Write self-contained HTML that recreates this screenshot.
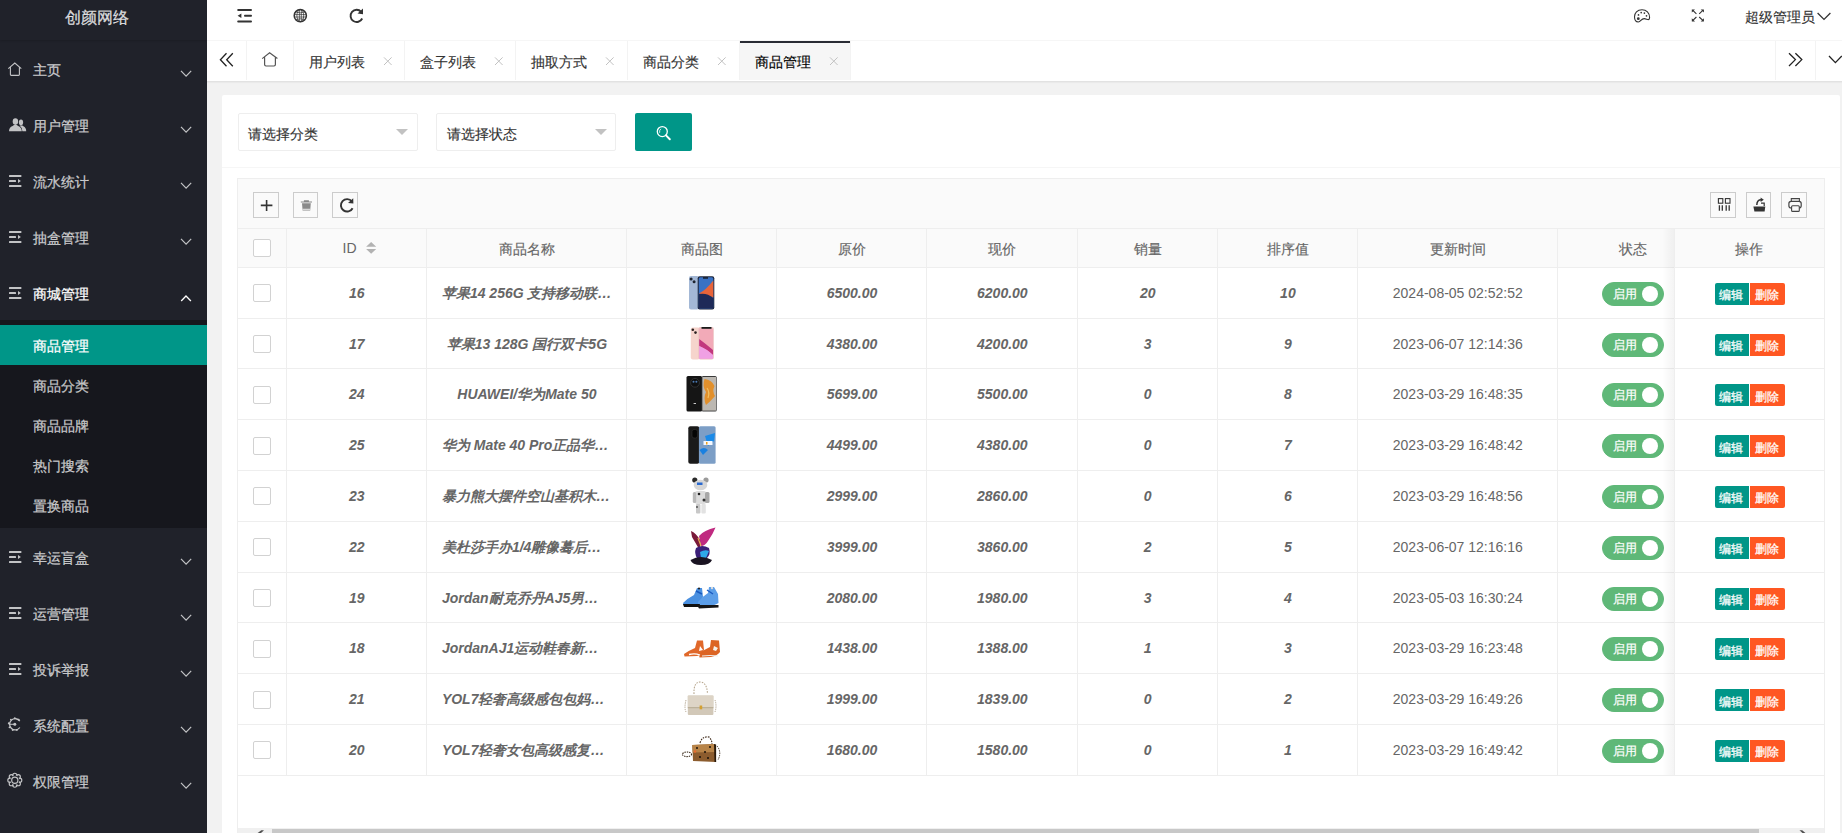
<!DOCTYPE html>
<html><head><meta charset="utf-8"><title>商品管理</title>
<style>
*{box-sizing:border-box;margin:0;padding:0}
html,body{width:1842px;height:833px;overflow:hidden;background:#f2f2f2;font-family:"Liberation Sans",sans-serif;font-size:14px;color:#333}
.a{position:absolute;white-space:nowrap}
.ov{position:absolute;left:0;top:0;pointer-events:none}
.c{position:absolute;text-align:center;color:#666;white-space:nowrap;overflow:hidden}
.b{font-weight:bold;font-style:italic}
.nm{padding:0 15px;text-overflow:ellipsis}
.cb{position:absolute;width:18px;height:18px;border:1px solid #d2d2d2;border-radius:2px;background:#fff}
.sw{position:absolute;width:62px;height:24px;border-radius:20px;background:#5fb878;border:1px solid #5fb878}
.sw span{-webkit-text-stroke:0.2px #fff;position:absolute;left:10px;top:0;line-height:22px;color:#fff;font-size:12px}
.sw i{position:absolute;left:39px;top:3px;width:16px;height:16px;border-radius:50%;background:#fff}
.ob{position:absolute;height:22px;line-height:22px;color:#fff;font-size:12px;text-align:center}
.hl{position:absolute;height:1px;background:#eee}
.st{-webkit-text-stroke:0.15px currentColor}
.st2{-webkit-text-stroke:0.25px currentColor}
.vl{position:absolute;width:1px;background:#eee}
</style></head><body>

<div class="a" style="left:0;top:0;width:207px;height:833px;background:#20222a"></div>
<div class="a" style="left:0;top:0;width:207px;height:40px;box-shadow:0 1px 2px 0 rgba(0,0,0,.15)"></div>
<span class="a st2" style="left:65px;top:-2px;line-height:40px;font-size:16px;color:rgba(255,255,255,.8)">创颜网络</span>
<span class="a st2" style="left:33px;top:41.5px;line-height:56px;color:rgba(255,255,255,.7)">主页</span>
<span class="a st2" style="left:33px;top:97.5px;line-height:56px;color:rgba(255,255,255,.7)">用户管理</span>
<span class="a st2" style="left:33px;top:153.5px;line-height:56px;color:rgba(255,255,255,.7)">流水统计</span>
<span class="a st2" style="left:33px;top:209.5px;line-height:56px;color:rgba(255,255,255,.7)">抽盒管理</span>
<span class="a st2" style="left:33px;top:265.5px;line-height:56px;color:#fff">商城管理</span>
<div class="a" style="left:0;top:320px;width:207px;height:208px;background:rgba(0,0,0,.3)"></div>
<div class="a" style="left:0;top:324.5px;width:207px;height:40px;background:#009688"></div>
<span class="a st2" style="left:33px;top:326.0px;line-height:40px;color:#fff">商品管理</span>
<span class="a st2" style="left:33px;top:366.0px;line-height:40px;color:rgba(255,255,255,.7)">商品分类</span>
<span class="a st2" style="left:33px;top:406.0px;line-height:40px;color:rgba(255,255,255,.7)">商品品牌</span>
<span class="a st2" style="left:33px;top:446.0px;line-height:40px;color:rgba(255,255,255,.7)">热门搜索</span>
<span class="a st2" style="left:33px;top:486.0px;line-height:40px;color:rgba(255,255,255,.7)">置换商品</span>
<span class="a st2" style="left:33px;top:529.5px;line-height:56px;color:rgba(255,255,255,.7)">幸运盲盒</span>
<span class="a st2" style="left:33px;top:585.5px;line-height:56px;color:rgba(255,255,255,.7)">运营管理</span>
<span class="a st2" style="left:33px;top:641.5px;line-height:56px;color:rgba(255,255,255,.7)">投诉举报</span>
<span class="a st2" style="left:33px;top:697.5px;line-height:56px;color:rgba(255,255,255,.7)">系统配置</span>
<span class="a st2" style="left:33px;top:753.5px;line-height:56px;color:rgba(255,255,255,.7)">权限管理</span>
<div class="a" style="left:207px;top:0;width:1635px;height:41px;background:#fff;border-bottom:1px solid #f6f6f6"></div>
<span class="a st" style="left:1745px;top:0;line-height:34px;color:#333">超级管理员</span>
<div class="a" style="left:207px;top:41px;width:1635px;height:41px;background:#fff;border-bottom:1px solid #e2e2e2;box-shadow:0 1px 1px 0 rgba(0,0,0,.03)"></div>
<div class="a" style="left:739px;top:41px;width:111px;height:39px;background:#f6f6f6"></div>
<div class="a" style="left:739px;top:41px;width:111px;height:2px;background:#292b34"></div>
<div class="vl" style="left:245.8px;top:41px;height:39px;background:#f3f3f3"></div>
<div class="vl" style="left:292.8px;top:41px;height:39px;background:#f3f3f3"></div>
<div class="vl" style="left:403.5px;top:41px;height:39px;background:#f3f3f3"></div>
<div class="vl" style="left:514.5px;top:41px;height:39px;background:#f3f3f3"></div>
<div class="vl" style="left:626.5px;top:41px;height:39px;background:#f3f3f3"></div>
<div class="vl" style="left:738.5px;top:41px;height:39px;background:#f3f3f3"></div>
<div class="vl" style="left:849.5px;top:41px;height:39px;background:#f3f3f3"></div>
<div class="vl" style="left:1774.7px;top:41px;height:39px;background:#f3f3f3"></div>
<div class="vl" style="left:1814.8px;top:41px;height:39px;background:#f3f3f3"></div>
<span class="a st" style="left:308.5px;top:42px;line-height:40px;color:#333">用户列表</span>
<span class="a st" style="left:419.5px;top:42px;line-height:40px;color:#333">盒子列表</span>
<span class="a st" style="left:530.5px;top:42px;line-height:40px;color:#333">抽取方式</span>
<span class="a st" style="left:642.5px;top:42px;line-height:40px;color:#333">商品分类</span>
<span class="a st" style="left:754.5px;top:42px;line-height:40px;color:#000">商品管理</span>
<div class="a" style="left:222px;top:95px;width:1618px;height:760px;background:#fff;border-radius:2px"></div>
<div class="a" style="left:222px;top:166.5px;width:1618px;height:1px;background:#f6f6f6"></div>
<div class="a" style="left:237.5px;top:113px;width:180px;height:38px;border:1px solid #eee;border-radius:2px;background:#fff"></div>
<span class="a st" style="left:248.0px;top:115.5px;line-height:36px;color:#333">请选择分类</span>
<div class="a" style="left:435.5px;top:113px;width:180px;height:38px;border:1px solid #eee;border-radius:2px;background:#fff"></div>
<span class="a st" style="left:447.0px;top:115.5px;line-height:36px;color:#333">请选择状态</span>
<div class="a" style="left:635px;top:113.4px;width:57.3px;height:37.6px;background:#009688;border-radius:2px"></div>
<div class="a" style="left:237.3px;top:178.2px;width:1588px;height:700px;border:1px solid #eee;background:#fff"></div>
<div class="a" style="left:238.3px;top:179.2px;width:1586px;height:49.4px;background:#fafafa"></div>
<div class="a" style="left:253px;top:192.1px;width:25.6px;height:25.6px;border:1px solid #ccc"></div>
<div class="a" style="left:292.7px;top:192.1px;width:25.6px;height:25.6px;border:1px solid #ccc"></div>
<div class="a" style="left:332.3px;top:192.1px;width:25.6px;height:25.6px;border:1px solid #ccc"></div>
<div class="a" style="left:1710.1px;top:192.1px;width:25.6px;height:25.6px;border:1px solid #ccc"></div>
<div class="a" style="left:1745.9px;top:192.1px;width:25.6px;height:25.6px;border:1px solid #ccc"></div>
<div class="a" style="left:1781.4px;top:192.1px;width:25.6px;height:25.6px;border:1px solid #ccc"></div>
<div class="hl" style="left:238.3px;top:228.1px;width:1586px"></div>
<div class="a" style="left:238.3px;top:229.1px;width:1586px;height:37.70000000000002px;background:#fafafa"></div>
<div class="hl" style="left:238.3px;top:266.8px;width:1586px"></div>
<div class="hl" style="left:238.3px;top:317.59px;width:1586px"></div>
<div class="hl" style="left:238.3px;top:368.38px;width:1586px"></div>
<div class="hl" style="left:238.3px;top:419.17px;width:1586px"></div>
<div class="hl" style="left:238.3px;top:469.96px;width:1586px"></div>
<div class="hl" style="left:238.3px;top:520.75px;width:1586px"></div>
<div class="hl" style="left:238.3px;top:571.54px;width:1586px"></div>
<div class="hl" style="left:238.3px;top:622.33px;width:1586px"></div>
<div class="hl" style="left:238.3px;top:673.12px;width:1586px"></div>
<div class="hl" style="left:238.3px;top:723.91px;width:1586px"></div>
<div class="hl" style="left:238.3px;top:774.70px;width:1586px"></div>
<div class="vl" style="left:285.6px;top:228.6px;height:546.60px"></div>
<div class="vl" style="left:425.9px;top:228.6px;height:546.60px"></div>
<div class="vl" style="left:625.9px;top:228.6px;height:546.60px"></div>
<div class="vl" style="left:775.8px;top:228.6px;height:546.60px"></div>
<div class="vl" style="left:926.2px;top:228.6px;height:546.60px"></div>
<div class="vl" style="left:1076.5px;top:228.6px;height:546.60px"></div>
<div class="vl" style="left:1217.0px;top:228.6px;height:546.60px"></div>
<div class="vl" style="left:1356.8px;top:228.6px;height:546.60px"></div>
<div class="vl" style="left:1557.2px;top:228.6px;height:546.60px"></div>
<span class="a" style="left:342.5px;top:228.6px;line-height:38px;color:#666">ID</span>
<div class="c st" style="left:426.9px;top:229.6px;width:200.0px;line-height:38px">商品名称</div>
<div class="c st" style="left:626.9px;top:229.6px;width:149.89999999999998px;line-height:38px">商品图</div>
<div class="c st" style="left:776.8px;top:229.6px;width:150.4000000000001px;line-height:38px">原价</div>
<div class="c st" style="left:927.2px;top:229.6px;width:150.29999999999995px;line-height:38px">现价</div>
<div class="c st" style="left:1077.5px;top:229.6px;width:140.5px;line-height:38px">销量</div>
<div class="c st" style="left:1218.0px;top:229.6px;width:139.79999999999995px;line-height:38px">排序值</div>
<div class="c st" style="left:1357.8px;top:229.6px;width:200.4000000000001px;line-height:38px">更新时间</div>
<span class="a st" style="left:1619px;top:229.6px;line-height:38px;color:#666">状态</span>
<div class="cb" style="left:253px;top:239px"></div>
<div class="c b" style="left:286.6px;top:267.90px;width:140.29999999999995px;line-height:50.79px">16</div>
<div class="c b" style="left:776.8px;top:267.90px;width:150.4000000000001px;line-height:50.79px">6500.00</div>
<div class="c b" style="left:927.2px;top:267.90px;width:150.29999999999995px;line-height:50.79px">6200.00</div>
<div class="c b" style="left:1077.5px;top:267.90px;width:140.5px;line-height:50.79px">20</div>
<div class="c b" style="left:1218.0px;top:267.90px;width:139.79999999999995px;line-height:50.79px">10</div>
<div class="c b nm" style="left:426.9px;top:267.90px;width:200px;line-height:50.79px">苹果14 256G 支持移动联通电信</div>
<div class="c" style="left:1357.8px;top:267.90px;width:200px;line-height:50.79px">2024-08-05 02:52:52</div>
<div class="cb" style="left:253px;top:284.30px"></div>
<div class="sw" style="left:1602px;top:281.90px"><span>启用</span><i></i></div>
<div class="c b" style="left:286.6px;top:318.69px;width:140.29999999999995px;line-height:50.79px">17</div>
<div class="c b" style="left:776.8px;top:318.69px;width:150.4000000000001px;line-height:50.79px">4380.00</div>
<div class="c b" style="left:927.2px;top:318.69px;width:150.29999999999995px;line-height:50.79px">4200.00</div>
<div class="c b" style="left:1077.5px;top:318.69px;width:140.5px;line-height:50.79px">3</div>
<div class="c b" style="left:1218.0px;top:318.69px;width:139.79999999999995px;line-height:50.79px">9</div>
<div class="c b nm" style="left:426.9px;top:318.69px;width:200px;line-height:50.79px">苹果13 128G 国行双卡5G</div>
<div class="c" style="left:1357.8px;top:318.69px;width:200px;line-height:50.79px">2023-06-07 12:14:36</div>
<div class="cb" style="left:253px;top:335.09px"></div>
<div class="sw" style="left:1602px;top:332.69px"><span>启用</span><i></i></div>
<div class="c b" style="left:286.6px;top:369.48px;width:140.29999999999995px;line-height:50.79px">24</div>
<div class="c b" style="left:776.8px;top:369.48px;width:150.4000000000001px;line-height:50.79px">5699.00</div>
<div class="c b" style="left:927.2px;top:369.48px;width:150.29999999999995px;line-height:50.79px">5500.00</div>
<div class="c b" style="left:1077.5px;top:369.48px;width:140.5px;line-height:50.79px">0</div>
<div class="c b" style="left:1218.0px;top:369.48px;width:139.79999999999995px;line-height:50.79px">8</div>
<div class="c b nm" style="left:426.9px;top:369.48px;width:200px;line-height:50.79px">HUAWEI/华为Mate 50</div>
<div class="c" style="left:1357.8px;top:369.48px;width:200px;line-height:50.79px">2023-03-29 16:48:35</div>
<div class="cb" style="left:253px;top:385.88px"></div>
<div class="sw" style="left:1602px;top:383.48px"><span>启用</span><i></i></div>
<div class="c b" style="left:286.6px;top:420.27px;width:140.29999999999995px;line-height:50.79px">25</div>
<div class="c b" style="left:776.8px;top:420.27px;width:150.4000000000001px;line-height:50.79px">4499.00</div>
<div class="c b" style="left:927.2px;top:420.27px;width:150.29999999999995px;line-height:50.79px">4380.00</div>
<div class="c b" style="left:1077.5px;top:420.27px;width:140.5px;line-height:50.79px">0</div>
<div class="c b" style="left:1218.0px;top:420.27px;width:139.79999999999995px;line-height:50.79px">7</div>
<div class="c b nm" style="left:426.9px;top:420.27px;width:200px;line-height:50.79px">华为 Mate 40 Pro正品华为手机</div>
<div class="c" style="left:1357.8px;top:420.27px;width:200px;line-height:50.79px">2023-03-29 16:48:42</div>
<div class="cb" style="left:253px;top:436.67px"></div>
<div class="sw" style="left:1602px;top:434.27px"><span>启用</span><i></i></div>
<div class="c b" style="left:286.6px;top:471.06px;width:140.29999999999995px;line-height:50.79px">23</div>
<div class="c b" style="left:776.8px;top:471.06px;width:150.4000000000001px;line-height:50.79px">2999.00</div>
<div class="c b" style="left:927.2px;top:471.06px;width:150.29999999999995px;line-height:50.79px">2860.00</div>
<div class="c b" style="left:1077.5px;top:471.06px;width:140.5px;line-height:50.79px">0</div>
<div class="c b" style="left:1218.0px;top:471.06px;width:139.79999999999995px;line-height:50.79px">6</div>
<div class="c b nm" style="left:426.9px;top:471.06px;width:200px;line-height:50.79px">暴力熊大摆件空山基积木熊摆件</div>
<div class="c" style="left:1357.8px;top:471.06px;width:200px;line-height:50.79px">2023-03-29 16:48:56</div>
<div class="cb" style="left:253px;top:487.46px"></div>
<div class="sw" style="left:1602px;top:485.06px"><span>启用</span><i></i></div>
<div class="c b" style="left:286.6px;top:521.85px;width:140.29999999999995px;line-height:50.79px">22</div>
<div class="c b" style="left:776.8px;top:521.85px;width:150.4000000000001px;line-height:50.79px">3999.00</div>
<div class="c b" style="left:927.2px;top:521.85px;width:150.29999999999995px;line-height:50.79px">3860.00</div>
<div class="c b" style="left:1077.5px;top:521.85px;width:140.5px;line-height:50.79px">2</div>
<div class="c b" style="left:1218.0px;top:521.85px;width:139.79999999999995px;line-height:50.79px">5</div>
<div class="c b nm" style="left:426.9px;top:521.85px;width:200px;line-height:50.79px">美杜莎手办1/4雕像蓦后雕像</div>
<div class="c" style="left:1357.8px;top:521.85px;width:200px;line-height:50.79px">2023-06-07 12:16:16</div>
<div class="cb" style="left:253px;top:538.25px"></div>
<div class="sw" style="left:1602px;top:535.85px"><span>启用</span><i></i></div>
<div class="c b" style="left:286.6px;top:572.64px;width:140.29999999999995px;line-height:50.79px">19</div>
<div class="c b" style="left:776.8px;top:572.64px;width:150.4000000000001px;line-height:50.79px">2080.00</div>
<div class="c b" style="left:927.2px;top:572.64px;width:150.29999999999995px;line-height:50.79px">1980.00</div>
<div class="c b" style="left:1077.5px;top:572.64px;width:140.5px;line-height:50.79px">3</div>
<div class="c b" style="left:1218.0px;top:572.64px;width:139.79999999999995px;line-height:50.79px">4</div>
<div class="c b nm" style="left:426.9px;top:572.64px;width:200px;line-height:50.79px">Jordan耐克乔丹AJ5男子篮球鞋</div>
<div class="c" style="left:1357.8px;top:572.64px;width:200px;line-height:50.79px">2023-05-03 16:30:24</div>
<div class="cb" style="left:253px;top:589.04px"></div>
<div class="sw" style="left:1602px;top:586.64px"><span>启用</span><i></i></div>
<div class="c b" style="left:286.6px;top:623.43px;width:140.29999999999995px;line-height:50.79px">18</div>
<div class="c b" style="left:776.8px;top:623.43px;width:150.4000000000001px;line-height:50.79px">1438.00</div>
<div class="c b" style="left:927.2px;top:623.43px;width:150.29999999999995px;line-height:50.79px">1388.00</div>
<div class="c b" style="left:1077.5px;top:623.43px;width:140.5px;line-height:50.79px">1</div>
<div class="c b" style="left:1218.0px;top:623.43px;width:139.79999999999995px;line-height:50.79px">3</div>
<div class="c b nm" style="left:426.9px;top:623.43px;width:200px;line-height:50.79px">JordanAJ1运动鞋春新款男鞋</div>
<div class="c" style="left:1357.8px;top:623.43px;width:200px;line-height:50.79px">2023-03-29 16:23:48</div>
<div class="cb" style="left:253px;top:639.83px"></div>
<div class="sw" style="left:1602px;top:637.43px"><span>启用</span><i></i></div>
<div class="c b" style="left:286.6px;top:674.22px;width:140.29999999999995px;line-height:50.79px">21</div>
<div class="c b" style="left:776.8px;top:674.22px;width:150.4000000000001px;line-height:50.79px">1999.00</div>
<div class="c b" style="left:927.2px;top:674.22px;width:150.29999999999995px;line-height:50.79px">1839.00</div>
<div class="c b" style="left:1077.5px;top:674.22px;width:140.5px;line-height:50.79px">0</div>
<div class="c b" style="left:1218.0px;top:674.22px;width:139.79999999999995px;line-height:50.79px">2</div>
<div class="c b nm" style="left:426.9px;top:674.22px;width:200px;line-height:50.79px">YOL7轻奢高级感包包妈妈包</div>
<div class="c" style="left:1357.8px;top:674.22px;width:200px;line-height:50.79px">2023-03-29 16:49:26</div>
<div class="cb" style="left:253px;top:690.62px"></div>
<div class="sw" style="left:1602px;top:688.22px"><span>启用</span><i></i></div>
<div class="c b" style="left:286.6px;top:725.01px;width:140.29999999999995px;line-height:50.79px">20</div>
<div class="c b" style="left:776.8px;top:725.01px;width:150.4000000000001px;line-height:50.79px">1680.00</div>
<div class="c b" style="left:927.2px;top:725.01px;width:150.29999999999995px;line-height:50.79px">1580.00</div>
<div class="c b" style="left:1077.5px;top:725.01px;width:140.5px;line-height:50.79px">0</div>
<div class="c b" style="left:1218.0px;top:725.01px;width:139.79999999999995px;line-height:50.79px">1</div>
<div class="c b nm" style="left:426.9px;top:725.01px;width:200px;line-height:50.79px">YOL7轻奢女包高级感复古手提包</div>
<div class="c" style="left:1357.8px;top:725.01px;width:200px;line-height:50.79px">2023-03-29 16:49:42</div>
<div class="cb" style="left:253px;top:741.41px"></div>
<div class="sw" style="left:1602px;top:739.01px"><span>启用</span><i></i></div>
<div class="a" style="left:1662.4px;top:228.6px;width:12px;height:546.60px;background:linear-gradient(to right,rgba(0,0,0,0),rgba(0,0,0,.045))"></div>
<div class="a" style="left:1673.9px;top:229.1px;width:150.0px;height:37.70000000000002px;background:#fafafa;border-left:1px solid #eee"></div>
<span class="a st" style="left:1734.5px;top:229.6px;line-height:38px;color:#666">操作</span>
<div class="a" style="left:1673.9px;top:267.80px;width:150.0px;height:49.79px;background:#fff;border-left:1px solid #eee"></div>
<div class="ob" style="left:1714.8px;top:282.80px;width:34.4px;background:#009688;border-radius:2px 0 0 2px"><span class="st2" style="position:relative;top:1.5px;left:-0.8px">编辑</span></div>
<div class="ob" style="left:1749.8px;top:282.80px;width:35.2px;background:#ff5722;border-radius:0 2px 2px 0"><span class="st2" style="position:relative;top:1.5px;left:-0.8px">删除</span></div>
<div class="a" style="left:1673.9px;top:318.59px;width:150.0px;height:49.79px;background:#fff;border-left:1px solid #eee"></div>
<div class="ob" style="left:1714.8px;top:333.59px;width:34.4px;background:#009688;border-radius:2px 0 0 2px"><span class="st2" style="position:relative;top:1.5px;left:-0.8px">编辑</span></div>
<div class="ob" style="left:1749.8px;top:333.59px;width:35.2px;background:#ff5722;border-radius:0 2px 2px 0"><span class="st2" style="position:relative;top:1.5px;left:-0.8px">删除</span></div>
<div class="a" style="left:1673.9px;top:369.38px;width:150.0px;height:49.79px;background:#fff;border-left:1px solid #eee"></div>
<div class="ob" style="left:1714.8px;top:384.38px;width:34.4px;background:#009688;border-radius:2px 0 0 2px"><span class="st2" style="position:relative;top:1.5px;left:-0.8px">编辑</span></div>
<div class="ob" style="left:1749.8px;top:384.38px;width:35.2px;background:#ff5722;border-radius:0 2px 2px 0"><span class="st2" style="position:relative;top:1.5px;left:-0.8px">删除</span></div>
<div class="a" style="left:1673.9px;top:420.17px;width:150.0px;height:49.79px;background:#fff;border-left:1px solid #eee"></div>
<div class="ob" style="left:1714.8px;top:435.17px;width:34.4px;background:#009688;border-radius:2px 0 0 2px"><span class="st2" style="position:relative;top:1.5px;left:-0.8px">编辑</span></div>
<div class="ob" style="left:1749.8px;top:435.17px;width:35.2px;background:#ff5722;border-radius:0 2px 2px 0"><span class="st2" style="position:relative;top:1.5px;left:-0.8px">删除</span></div>
<div class="a" style="left:1673.9px;top:470.96px;width:150.0px;height:49.79px;background:#fff;border-left:1px solid #eee"></div>
<div class="ob" style="left:1714.8px;top:485.96px;width:34.4px;background:#009688;border-radius:2px 0 0 2px"><span class="st2" style="position:relative;top:1.5px;left:-0.8px">编辑</span></div>
<div class="ob" style="left:1749.8px;top:485.96px;width:35.2px;background:#ff5722;border-radius:0 2px 2px 0"><span class="st2" style="position:relative;top:1.5px;left:-0.8px">删除</span></div>
<div class="a" style="left:1673.9px;top:521.75px;width:150.0px;height:49.79px;background:#fff;border-left:1px solid #eee"></div>
<div class="ob" style="left:1714.8px;top:536.75px;width:34.4px;background:#009688;border-radius:2px 0 0 2px"><span class="st2" style="position:relative;top:1.5px;left:-0.8px">编辑</span></div>
<div class="ob" style="left:1749.8px;top:536.75px;width:35.2px;background:#ff5722;border-radius:0 2px 2px 0"><span class="st2" style="position:relative;top:1.5px;left:-0.8px">删除</span></div>
<div class="a" style="left:1673.9px;top:572.54px;width:150.0px;height:49.79px;background:#fff;border-left:1px solid #eee"></div>
<div class="ob" style="left:1714.8px;top:587.54px;width:34.4px;background:#009688;border-radius:2px 0 0 2px"><span class="st2" style="position:relative;top:1.5px;left:-0.8px">编辑</span></div>
<div class="ob" style="left:1749.8px;top:587.54px;width:35.2px;background:#ff5722;border-radius:0 2px 2px 0"><span class="st2" style="position:relative;top:1.5px;left:-0.8px">删除</span></div>
<div class="a" style="left:1673.9px;top:623.33px;width:150.0px;height:49.79px;background:#fff;border-left:1px solid #eee"></div>
<div class="ob" style="left:1714.8px;top:638.33px;width:34.4px;background:#009688;border-radius:2px 0 0 2px"><span class="st2" style="position:relative;top:1.5px;left:-0.8px">编辑</span></div>
<div class="ob" style="left:1749.8px;top:638.33px;width:35.2px;background:#ff5722;border-radius:0 2px 2px 0"><span class="st2" style="position:relative;top:1.5px;left:-0.8px">删除</span></div>
<div class="a" style="left:1673.9px;top:674.12px;width:150.0px;height:49.79px;background:#fff;border-left:1px solid #eee"></div>
<div class="ob" style="left:1714.8px;top:689.12px;width:34.4px;background:#009688;border-radius:2px 0 0 2px"><span class="st2" style="position:relative;top:1.5px;left:-0.8px">编辑</span></div>
<div class="ob" style="left:1749.8px;top:689.12px;width:35.2px;background:#ff5722;border-radius:0 2px 2px 0"><span class="st2" style="position:relative;top:1.5px;left:-0.8px">删除</span></div>
<div class="a" style="left:1673.9px;top:724.91px;width:150.0px;height:49.79px;background:#fff;border-left:1px solid #eee"></div>
<div class="ob" style="left:1714.8px;top:739.91px;width:34.4px;background:#009688;border-radius:2px 0 0 2px"><span class="st2" style="position:relative;top:1.5px;left:-0.8px">编辑</span></div>
<div class="ob" style="left:1749.8px;top:739.91px;width:35.2px;background:#ff5722;border-radius:0 2px 2px 0"><span class="st2" style="position:relative;top:1.5px;left:-0.8px">删除</span></div>
<div class="a" style="left:238.3px;top:827.5px;width:1586px;height:6px;background:#f0f0f0"></div>
<div class="a" style="left:271.7px;top:828.5px;width:1487.3px;height:5px;background:#c8c8c8"></div>
<svg class="ov" width="1842" height="833" viewBox="0 0 1842 833"><path d="M8.3 68.6 L14.8 63 L21.3 68.6 M10.4 67.2 V74.6 Q10.4 75.4 11.2 75.4 H18.6 Q19.4 75.4 19.4 74.6 V67.2" fill="none" stroke="#c2c3c5" stroke-width="1.1"/><ellipse cx="15.4" cy="121.6" rx="2.7" ry="3.3" fill="#c2c3c5"/><path d="M9 131.2 Q9 127.3 12.6 126 L14 125 H16.8 L18.2 126 Q21.6 127.3 21.8 131.2Z" fill="#c2c3c5"/><ellipse cx="21" cy="122.4" rx="2.1" ry="2.8" fill="#c2c3c5"/><path d="M19.6 125.6 H22.4 L23.4 126.2 Q26.2 127.5 26.2 131.2 H22.4 Q22.4 128 19.6 125.6Z" fill="#c2c3c5"/><rect x="9" y="175" width="12.4" height="2" rx="0.5" fill="#c2c3c5"/><rect x="9" y="180" width="7" height="2" rx="0.5" fill="#c2c3c5"/><path d="M18 179.1 L20.9 181 L18 182.9Z" fill="#c2c3c5"/><rect x="9" y="184.9" width="12.4" height="2" rx="0.5" fill="#c2c3c5"/><rect x="9" y="231" width="12.4" height="2" rx="0.5" fill="#c2c3c5"/><rect x="9" y="236" width="7" height="2" rx="0.5" fill="#c2c3c5"/><path d="M18 235.1 L20.9 237 L18 238.9Z" fill="#c2c3c5"/><rect x="9" y="240.9" width="12.4" height="2" rx="0.5" fill="#c2c3c5"/><rect x="9" y="287" width="12.4" height="2" rx="0.5" fill="#c2c3c5"/><rect x="9" y="292" width="7" height="2" rx="0.5" fill="#c2c3c5"/><path d="M18 291.1 L20.9 293 L18 294.9Z" fill="#c2c3c5"/><rect x="9" y="296.9" width="12.4" height="2" rx="0.5" fill="#c2c3c5"/><rect x="9" y="551" width="12.4" height="2" rx="0.5" fill="#c2c3c5"/><rect x="9" y="556" width="7" height="2" rx="0.5" fill="#c2c3c5"/><path d="M18 555.1 L20.9 557 L18 558.9Z" fill="#c2c3c5"/><rect x="9" y="560.9" width="12.4" height="2" rx="0.5" fill="#c2c3c5"/><rect x="9" y="607" width="12.4" height="2" rx="0.5" fill="#c2c3c5"/><rect x="9" y="612" width="7" height="2" rx="0.5" fill="#c2c3c5"/><path d="M18 611.1 L20.9 613 L18 614.9Z" fill="#c2c3c5"/><rect x="9" y="616.9" width="12.4" height="2" rx="0.5" fill="#c2c3c5"/><rect x="9" y="663" width="12.4" height="2" rx="0.5" fill="#c2c3c5"/><rect x="9" y="668" width="7" height="2" rx="0.5" fill="#c2c3c5"/><path d="M18 667.1 L20.9 669 L18 670.9Z" fill="#c2c3c5"/><rect x="9" y="672.9" width="12.4" height="2" rx="0.5" fill="#c2c3c5"/><path d="M19.8 721.1 A5.6 5.6 0 1 0 19.8 727.5" fill="none" stroke="#c2c3c5" stroke-width="1.3"/><circle cx="18.72" cy="719.63" r="0.95" fill="#c2c3c5"/><circle cx="14.80" cy="718.20" r="0.95" fill="#c2c3c5"/><circle cx="10.88" cy="719.63" r="0.95" fill="#c2c3c5"/><circle cx="8.79" cy="723.24" r="0.95" fill="#c2c3c5"/><circle cx="9.52" cy="727.35" r="0.95" fill="#c2c3c5"/><circle cx="12.71" cy="730.03" r="0.95" fill="#c2c3c5"/><circle cx="16.89" cy="730.03" r="0.95" fill="#c2c3c5"/><path d="M8.8 724.3 H14.8" stroke="#c2c3c5" stroke-width="1"/><circle cx="14.8" cy="724.3" r="1.5" fill="#c2c3c5"/><circle cx="19.70" cy="780.20" r="2.1" fill="none" stroke="#c2c3c5" stroke-width="1.15"/><circle cx="18.26" cy="783.66" r="2.1" fill="none" stroke="#c2c3c5" stroke-width="1.15"/><circle cx="14.80" cy="785.10" r="2.1" fill="none" stroke="#c2c3c5" stroke-width="1.15"/><circle cx="11.34" cy="783.66" r="2.1" fill="none" stroke="#c2c3c5" stroke-width="1.15"/><circle cx="9.90" cy="780.20" r="2.1" fill="none" stroke="#c2c3c5" stroke-width="1.15"/><circle cx="11.34" cy="776.74" r="2.1" fill="none" stroke="#c2c3c5" stroke-width="1.15"/><circle cx="14.80" cy="775.30" r="2.1" fill="none" stroke="#c2c3c5" stroke-width="1.15"/><circle cx="18.26" cy="776.74" r="2.1" fill="none" stroke="#c2c3c5" stroke-width="1.15"/><circle cx="14.8" cy="780.2" r="4.6" fill="#20222a"/><circle cx="14.8" cy="780.2" r="3.1" fill="none" stroke="#c2c3c5" stroke-width="1.2"/><path d="M181 70.8 L186.1 76.2 L191.2 70.8" fill="none" stroke="#c2c3c5" stroke-width="1.2"/><path d="M181 126.8 L186.1 132.2 L191.2 126.8" fill="none" stroke="#c2c3c5" stroke-width="1.2"/><path d="M181 182.8 L186.1 188.2 L191.2 182.8" fill="none" stroke="#c2c3c5" stroke-width="1.2"/><path d="M181 238.8 L186.1 244.2 L191.2 238.8" fill="none" stroke="#c2c3c5" stroke-width="1.2"/><path d="M181.2 301 L186 296 L190.9 301" fill="none" stroke="#fff" stroke-width="1.3"/><path d="M181 558.8 L186.1 564.2 L191.2 558.8" fill="none" stroke="#c2c3c5" stroke-width="1.2"/><path d="M181 614.8 L186.1 620.2 L191.2 614.8" fill="none" stroke="#c2c3c5" stroke-width="1.2"/><path d="M181 670.8 L186.1 676.2 L191.2 670.8" fill="none" stroke="#c2c3c5" stroke-width="1.2"/><path d="M181 726.8 L186.1 732.2 L191.2 726.8" fill="none" stroke="#c2c3c5" stroke-width="1.2"/><path d="M181 782.8 L186.1 788.2 L191.2 782.8" fill="none" stroke="#c2c3c5" stroke-width="1.2"/><rect x="237.2" y="9.1" width="14.8" height="2" rx="1" fill="#333"/><rect x="244" y="14.8" width="8" height="1.9" rx="0.9" fill="#333"/><path d="M237.6 15.8 L241.4 13.6 V18.1Z" fill="#333"/><rect x="237.2" y="20.4" width="14.8" height="2" rx="1" fill="#333"/><circle cx="300.3" cy="15.7" r="6.1" fill="none" stroke="#333" stroke-width="1.5"/><ellipse cx="300.3" cy="15.7" rx="3.4" ry="6" fill="none" stroke="#333" stroke-width="0.8"/><path d="M299.4 9.8 V21.6 M301.3 9.8 V21.6 M294.6 14.6 H306 M294.6 17 H306 M295.8 12 Q300.3 13.6 304.8 12 M295.8 19.6 Q300.3 18 304.8 19.6" fill="none" stroke="#333" stroke-width="0.7"/><path d="M361.2 11.8 A6.1 6.1 0 1 0 362.2 18.5" fill="none" stroke="#333" stroke-width="1.9"/><path d="M357.5 13.6 L363 14.2 L363 8.6Z" fill="#333"/><path d="M1642 9.8 C1637.2 9.8 1634.5 13 1634.5 16.8 C1634.5 20 1636.2 22 1638.3 22 C1640.8 22 1641 18.6 1644.2 18.6 C1646 18.6 1647 19.6 1648.4 19.6 C1649.4 19.6 1649.6 18.8 1649.6 17.6 C1649.6 13 1646.4 9.8 1642 9.8Z" fill="none" stroke="#333" stroke-width="1.1"/><circle cx="1638.5" cy="14.9" r="0.85" fill="#333"/><circle cx="1641.2" cy="12.6" r="0.85" fill="#333"/><circle cx="1644.4" cy="13.1" r="0.85" fill="#333"/><circle cx="1646.5" cy="15.8" r="0.85" fill="#333"/><circle cx="1638.3" cy="18.7" r="1.4" fill="#333"/><path d="M1692.6 10.2 L1696.4 13.9 M1703.1 10.2 L1699.2 13.9 M1692.6 20.7 L1696.4 17 M1703.1 20.7 L1699.2 17" stroke="#333" stroke-width="1.1"/><path d="M1691.8 9.4 H1695 L1691.8 12.6Z M1703.9 9.4 H1700.7 L1703.9 12.6Z M1691.8 21.5 H1695 L1691.8 18.3Z M1703.9 21.5 H1700.7 L1703.9 18.3Z" fill="#333"/><path d="M1817.6 13 L1824 19.4 L1830.4 13" fill="none" stroke="#333" stroke-width="1.3"/><path d="M226.5 53.3 L220.4 59.8 L226.5 66.3 M232.8 53.3 L226.7 59.8 L232.8 66.3" fill="none" stroke="#222" stroke-width="1.3"/><path d="M262.2 58.6 L269.6 52.8 L277.4 58.6 M264.6 57.2 V64.6 Q264.6 66 266 66 H274 Q275.4 66 275.4 64.6 V57.2" fill="none" stroke="#555" stroke-width="1.2"/><path d="M384 57.4 L391.6 65 M391.6 57.4 L384 65" stroke="#c2c2c2" stroke-width="1"/><path d="M495 57.4 L502.6 65 M502.6 57.4 L495 65" stroke="#c2c2c2" stroke-width="1"/><path d="M606 57.4 L613.6 65 M613.6 57.4 L606 65" stroke="#c2c2c2" stroke-width="1"/><path d="M718 57.4 L725.6 65 M725.6 57.4 L718 65" stroke="#c2c2c2" stroke-width="1"/><path d="M830 57.4 L837.6 65 M837.6 57.4 L830 65" stroke="#c2c2c2" stroke-width="1"/><path d="M1789 53.2 L1795.4 59.6 L1789 66 M1795.4 53.2 L1801.8 59.6 L1795.4 66" fill="none" stroke="#222" stroke-width="1.3"/><path d="M1829 56 L1835.4 62.6 L1841.8 56" fill="none" stroke="#222" stroke-width="1.3"/><path d="M396.0 129 H408.0 L402.0 135Z" fill="#c2c2c2"/><path d="M595.0 129 H607.0 L601.0 135Z" fill="#c2c2c2"/><circle cx="662.3" cy="131.6" r="5" fill="none" stroke="#fff" stroke-width="1.3"/><path d="M666 135.4 L669.8 139.2" stroke="#fff" stroke-width="2" stroke-linecap="round"/><path d="M659.6 132.8 Q659.2 130 661 128.8" fill="none" stroke="#fff" stroke-width="0.8"/><path d="M260.8 205.4 H272.4 M266.6 199.9 V210.9" stroke="#333" stroke-width="1.6"/><path d="M300.8 202 H312 M304.5 202 V200.8 H308.3 V202" fill="none" stroke="#888" stroke-width="1.2"/><path d="M302 203.2 H310.8 L310.2 210.6 H302.6Z" fill="#8a8a8a"/><rect x="302.6" y="208.8" width="7.6" height="0.9" fill="#fafafa"/><path d="M351.9 201.4 A6.2 6.2 0 1 0 352.6 208.2" fill="none" stroke="#333" stroke-width="1.9"/><path d="M348 203 L353.4 203.6 L353.2 198.2Z" fill="#333"/><rect x="1718.4" y="198.6" width="4.4" height="4.6" fill="none" stroke="#333" stroke-width="1.1"/><rect x="1725.4" y="198.6" width="4.6" height="4.6" fill="none" stroke="#333" stroke-width="1.1"/><path d="M1719.4 205.3 V210.7 M1722.3 205.3 V210.7 M1726.2 205.3 V210.7 M1729.2 205.3 V210.7" stroke="#333" stroke-width="1.3"/><path d="M1753.4 206.4 H1765.3 L1764.6 211.6 H1754.4Z" fill="#333"/><path d="M1764.2 206 V203.2 H1761" fill="none" stroke="#333" stroke-width="1.2"/><path d="M1756.8 205 Q1757 199.8 1761.2 199.8" fill="none" stroke="#333" stroke-width="1.5"/><path d="M1760.6 197.6 L1763.8 199.8 L1760.6 202Z" fill="#333"/><path d="M1791.3 201.6 V198.6 H1799.4 V201.6" fill="none" stroke="#444" stroke-width="1.1"/><rect x="1788.9" y="201.4" width="12.3" height="6.6" rx="2.2" fill="none" stroke="#444" stroke-width="1.2"/><rect x="1791.6" y="205.8" width="7.7" height="5.6" rx="1" fill="#fafafa" stroke="#444" stroke-width="1.1"/><path d="M366.1 246.8 L371.15 242 L376.2 246.8Z M366.1 248.9 L371.15 253.8 L376.2 248.9Z" fill="#b2b2b2"/><path d="M257 833.5 L261.3 830.2 L264 830.2 L260.5 833.5Z" fill="#505050"/><path d="M1799.5 830.2 L1802.2 830.2 L1806 833.5 L1803 833.5Z" fill="#505050"/><rect x="689" y="276" width="10" height="33.6" rx="2" fill="#a3b8d6"/><circle cx="691.1" cy="279.1" r="1.5" fill="#1e2430"/><circle cx="694.1" cy="281.8" r="1.5" fill="#1e2430"/>
          <rect x="697.7" y="276.3" width="16.6" height="33.3" rx="2" fill="#1c2438"/><rect x="698.7" y="277.3" width="14.6" height="31.3" rx="1.5" fill="#3a72c4"/>
          <path d="M713.3 280.5 V297.5 Q707 295.5 699 293.5 Q706 290 713.3 280.5Z" fill="#e8643a"/><path d="M699 294 Q707 292.5 713.3 298 V308.6 H698.7Z" fill="#1e2a58"/><rect x="703" y="277.3" width="5" height="1.3" fill="#111"/><rect x="690.8" y="327.6" width="9" height="31.8" rx="2" fill="#f6d4cc"/><circle cx="692.8" cy="329.8" r="1.3" fill="#2a2020"/><circle cx="695.5" cy="332.6" r="1.3" fill="#2a2020"/>
          <rect x="698.4" y="327" width="15.4" height="32.4" rx="2" fill="#ecc0c0"/><rect x="699.2" y="328.4" width="13.8" height="30.4" rx="1.5" fill="#f2aab8"/>
          <path d="M699.2 339 Q706 344 713 350 V355 Q706 349 699.2 346Z" fill="#c2387e"/><path d="M699.2 346 Q707 349 713 355 V358.8 H699.2Z" fill="#f0a0e4"/><rect x="701.5" y="327" width="10" height="1.8" fill="#1a1a1a"/><rect x="686.5" y="376" width="15.6" height="35.4" rx="1.5" fill="#151515"/><circle cx="695" cy="382.8" r="4.4" fill="#0e0e0e" stroke="#3a3a3a" stroke-width="0.8"/><circle cx="693.5" cy="381.8" r="1" fill="#4a78b0"/><circle cx="696.4" cy="381.8" r="1" fill="#4a78b0"/>
          <rect x="693.6" y="403" width="2.4" height="1" fill="#ccc"/>
          <rect x="701.6" y="376" width="15.1" height="35.4" rx="1.5" fill="#3a3a3a"/><rect x="702.4" y="377" width="13.6" height="33.6" fill="#bcb8b2"/>
          <path d="M704.5 379 Q712 380 714.5 386 Q712 391 715 396 Q710 402 706 405 Q703 398 706 392 Q702 386 704.5 379Z" fill="#e2902c"/><path d="M707 388 Q710 392 708 398" stroke="#f4c060" stroke-width="1.2" fill="none"/><rect x="688.3" y="426.2" width="11" height="37.5" rx="2" fill="#1a1a1a"/><rect x="692" y="429.5" width="5.4" height="8.5" rx="2" fill="#050505" stroke="#333" stroke-width="0.6"/>
          <rect x="698.9" y="426.2" width="16.7" height="37.5" rx="1.5" fill="#7c9ec6"/><path d="M705 436 L715 433 L714 441 L708 446 Z" fill="#1a8ae8"/><path d="M699.5 450 Q704 446 708 450 L703 455Z" fill="#1a80e0"/><rect x="703.5" y="441" width="9" height="4" fill="#f4f8ff"/><rect x="706" y="442" width="1.5" height="2.5" fill="#e8a020"/><circle cx="694.8" cy="480" r="2.6" fill="#2a2a2a"/><circle cx="706" cy="480" r="2.6" fill="#9a9a9a"/><ellipse cx="700.5" cy="485" rx="6.8" ry="5.2" fill="#d6d6d6"/><rect x="697" y="482.5" width="5.5" height="2.5" fill="#2a6ad0"/>
          <rect x="695" y="491" width="11" height="13" rx="2" fill="#dcdcdc"/><rect x="692.8" y="492" width="3.4" height="11" rx="1.5" fill="#b8b8b8"/><rect x="705" y="492" width="4.5" height="11" rx="1.5" fill="#a8a8a8"/>
          <rect x="696" y="504" width="4.4" height="9.4" rx="1" fill="#c8c8c8"/><rect x="701.4" y="504" width="4.4" height="9.4" rx="1" fill="#e2e2e2"/><circle cx="699" cy="494" r="1.3" fill="#222"/><circle cx="704" cy="500" r="1.5" fill="#333"/><circle cx="697" cy="507" r="1" fill="#555"/><path d="M699 536 Q704 530 715.5 527.5 Q713 534 708 541 Q705 546 701 546Z" fill="#c02a80"/><path d="M691 531 Q696 533 700 540 Q701 546 699 549 Q695 542 692 537Z" fill="#7a1a3a"/>
          <path d="M696 548 Q702 544 709 548 Q711 554 707 558 L697 558 Q694 553 696 548Z" fill="#3a1e78"/><path d="M700 552 Q705 549 709 551 L706 558 L701 558Z" fill="#2ea8e8"/>
          <path d="M690.5 560 Q701 554 712 560 Q710 565 701 565 Q692 565 690.5 560Z" fill="#1a1422"/><path d="M698 538 L701 546" stroke="#e8b050" stroke-width="1.2"/><path d="M683 603 Q688 598 694 595 L697 588 L702 588 L703 597 Q701 603 698 605 L684 606Z" fill="#4a90e0"/>
          <path d="M698 602 Q703 596 708 593 L709 587 L714 587 L718 594 L718.5 603 Q714 606 708 606 L698 606Z" fill="#5c9ee8"/><path d="M696 591 L702 594 M707 590 L713 594" stroke="#1a5ac0" stroke-width="1.4"/>
          <path d="M683 604 H700 L699 607 H684Z" fill="#111"/><path d="M697 605 H718.5 V607.5 L699 608.5Z" fill="#151515"/><circle cx="699" cy="588.5" r="1.1" fill="#222"/><circle cx="712" cy="588" r="1.2" fill="#ddd"/><path d="M684 654 Q690 650 695 648 L697 640.5 L703 640.5 L704 650 Q702 655 697 656 L684.5 656.5Z" fill="#e0682a"/>
          <path d="M699 654 Q705 649 710 647 L711 640 L719 640.5 L720 652 Q717 656 711 657 L699.5 657.5Z" fill="#dc6424"/><path d="M689 654.5 Q695 653 700 655" stroke="#fff" stroke-width="1.3" fill="none"/><path d="M702 656 Q710 655 718 656" stroke="#f0f0f0" stroke-width="1" fill="none"/>
          <path d="M700 646 L703 650 L699 651Z" fill="#fff"/><path d="M714 646 L718 648 L716 651 L713 650Z" fill="#f4f0ea"/><path d="M694 694 Q693.5 682 700 682 Q707 682 707.5 694" stroke="#b8a890" stroke-width="1.1" fill="none" stroke-dasharray="1.6 1.2"/>
          <rect x="687.8" y="695.6" width="25.6" height="19.3" rx="1" fill="#d2c8b8"/><path d="M687.8 695.6 H713.4 V707.7 H687.8Z" fill="#ddd4c6"/><rect x="687.8" y="707.2" width="25.6" height="1" fill="#b4a890"/><rect x="699.6" y="705.5" width="2.6" height="3.8" fill="#d4a030"/>
          <path d="M686 700 Q684 708 686 712 M715 700 Q717 706 715 712" stroke="#b0a08a" stroke-width="1" fill="none" stroke-dasharray="1.2 1"/><path d="M700 743 Q702 736 709 737 Q712 740 712 744" stroke="#3a2414" stroke-width="1.1" fill="none" stroke-dasharray="1.6 1.1"/>
          <path d="M692.3 745 L715 743.9 L716.1 762 L693 761Z" fill="#8c5c2e"/><path d="M692.3 745 L715 743.9 L715.5 752 L692.6 752.6Z" fill="#b88448"/><path d="M714 744 L716.1 744.5 L716.1 762 L714.5 762Z" fill="#2a1a0a"/>
          <circle cx="697" cy="748" r="1" fill="#1a1008"/><circle cx="705" cy="752" r="1" fill="#1a1008"/><circle cx="710" cy="747" r="1" fill="#1a1008"/><circle cx="700" cy="757" r="1" fill="#1a1008"/><circle cx="708" cy="758" r="1" fill="#1a1008"/><circle cx="695" cy="751.5" r="1.2" fill="#e86a30"/>
          <ellipse cx="687" cy="754.3" rx="4.6" ry="2.3" stroke="#3a2a1a" stroke-width="1.1" fill="none" stroke-dasharray="1.4 0.9"/><path d="M717 746 Q722 752 718 760" stroke="#3a2a1a" stroke-width="1" fill="none" stroke-dasharray="1.4 1"/></svg>
</body></html>
